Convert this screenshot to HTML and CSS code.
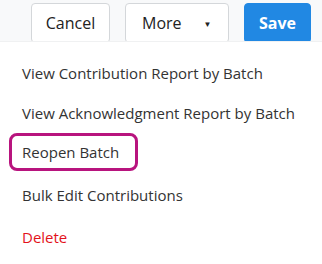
FILE: index.html
```html
<!DOCTYPE html>
<html>
<head>
<meta charset="utf-8">
<link rel="stylesheet" href="styles.css">
</head>
<body>
<div class="toolbar">
  <button class="btn btn-default">Cancel</button>
  <button class="btn btn-default btn-more"><span>More</span><span class="caret">&#9660;</span></button>
  <button class="btn btn-primary">Save</button>
</div>
<ul class="menu">
  <li class="item"><span class="label">View Contribution Report by Batch</span></li>
  <li class="item"><span class="label">View Acknowledgment Report by Batch</span></li>
  <li class="item"><span class="label highlight">Reopen Batch</span></li>
  <li class="item item-bulk"><span class="label">Bulk Edit Contributions</span></li>
  <li class="item"><span class="label danger">Delete</span></li>
</ul>
</body>
</html>
```
FILE: styles.css
```css
html, body {
  margin: 0;
  padding: 0;
  background: #fff;
  font-family: "Open Sans", "Noto Sans", sans-serif;
  color: #333;
}
.toolbar {
  height: 42px;
  box-sizing: border-box;
  background: #f8f9fa;
  display: flex;
  justify-content: flex-end;
  align-items: flex-start;
  gap: 15px;
  padding: 3px 11px 0 0;
  overflow: hidden;
  border-bottom: 1px solid #f0f1f2;
}
.btn {
  height: 40px;
  box-sizing: border-box;
  border-radius: 4px;
  font-family: "Open Sans", "Noto Sans", sans-serif;
  font-size: 16px;
  display: flex;
  align-items: center;
  justify-content: center;
  padding: 0;
  margin: 0;
}
.btn-default {
  background: #fff;
  border: 1px solid #d4d7da;
  color: #222;
  width: 79px;
}
.btn-more {
  width: 104px;
  justify-content: flex-start;
  padding-left: 16px;
  gap: 22px;
}
.caret {
  font-size: 8px;
  color: #222;
}
.btn-primary {
  background: #2188e3;
  border: 1px solid #2188e3;
  color: #fff;
  font-weight: 700;
  width: 67px;
}
.menu {
  list-style: none;
  margin: 0;
  padding: 11px 0 0 0;
}
.item {
  height: 40px;
  display: flex;
  align-items: center;
  padding-left: 22px;
  font-size: 15px;
}
.item-bulk {
  height: 44px;
}
.label {
  display: inline-block;
}
.highlight {
  border: 3px solid #b8147e;
  border-radius: 8px;
  padding: 6px 16px 6px 10px;
  margin-left: -13px;
  margin-top: -3px;
}
.danger {
  color: #e3121b;
}
```
